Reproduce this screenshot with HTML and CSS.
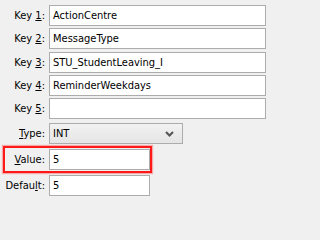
FILE: index.html
```html
<!DOCTYPE html>
<html>
<head>
<meta charset="utf-8">
<link rel="stylesheet" href="styles.css">
</head>
<body>
<div class="form">
  <div class="row"><label class="lbl">Key <u>1</u>:</label><div class="field wide">ActionCentre</div></div>
  <div class="row"><label class="lbl">Key <u>2</u>:</label><div class="field wide">MessageType</div></div>
  <div class="row r3"><label class="lbl">Key <u>3</u>:</label><div class="field wide">STU_StudentLeaving_I</div></div>
  <div class="row"><label class="lbl">Key <u>4</u>:</label><div class="field wide">ReminderWeekdays</div></div>
  <div class="row"><label class="lbl">Key <u>5</u>:</label><div class="field wide"></div></div>
  <div class="row r6"><label class="lbl"><u>T</u>ype:</label>
    <div class="select"><span>INT</span>
      <svg class="chev" width="9" height="6" viewBox="0 0 9 6"><path d="M1 1 L4.5 4.5 L8 1" fill="none" stroke="#555" stroke-width="2"/></svg>
    </div>
  </div>
  <div class="row hl"><label class="lbl"><u>V</u>alue:</label><div class="field narrow">5</div></div>
  <div class="row"><label class="lbl">Defau<u>l</u>t:</label><div class="field narrow">5</div></div>
</div>
</body>
</html>
```
FILE: styles.css
```css
html, body {
  margin: 0;
  padding: 0;
  background: #f0f0f0;
}
body {
  width: 271px;
  height: 202px;
  overflow: hidden;
}
.form {
  display: flex;
  flex-direction: column;
  align-items: flex-start;
  gap: 2px;
  padding: 5px 0 0 3px;
  font-family: "DejaVu Sans Condensed", "Liberation Sans", sans-serif;
  font-size: 11px;
  color: #000;
}
.row {
  display: flex;
  align-items: center;
  gap: 4px;
  border: 2px solid transparent;
  border-top: 0;
  border-bottom: 0;
}
.r3 { margin-top: 1px; }
.r6 { margin-top: 2px; }
.lbl {
  width: 40px;
  text-align: right;
  white-space: nowrap;
}
.field {
  box-sizing: border-box;
  height: 21px;
  line-height: 19px;
  border: 1px solid #acacac;
  background: #fff;
  padding: 0 3px;
  white-space: nowrap;
  overflow: hidden;
}
.wide { width: 217px; }
.narrow { width: 101px; }
.select {
  box-sizing: border-box;
  width: 134px;
  height: 21px;
  line-height: 19px;
  border: 1px solid #acacac;
  background: linear-gradient(#f2f2f2, #e5e5e5);
  padding: 0 3px;
  display: flex;
  align-items: center;
  justify-content: space-between;
}
.chev { margin-right: 5px; }
.hl {
  border: 2px solid #ff1a1a;
  box-shadow: 0 0 1px 1px rgba(255, 80, 80, 0.45);
  padding: 1px 0;
}
```
